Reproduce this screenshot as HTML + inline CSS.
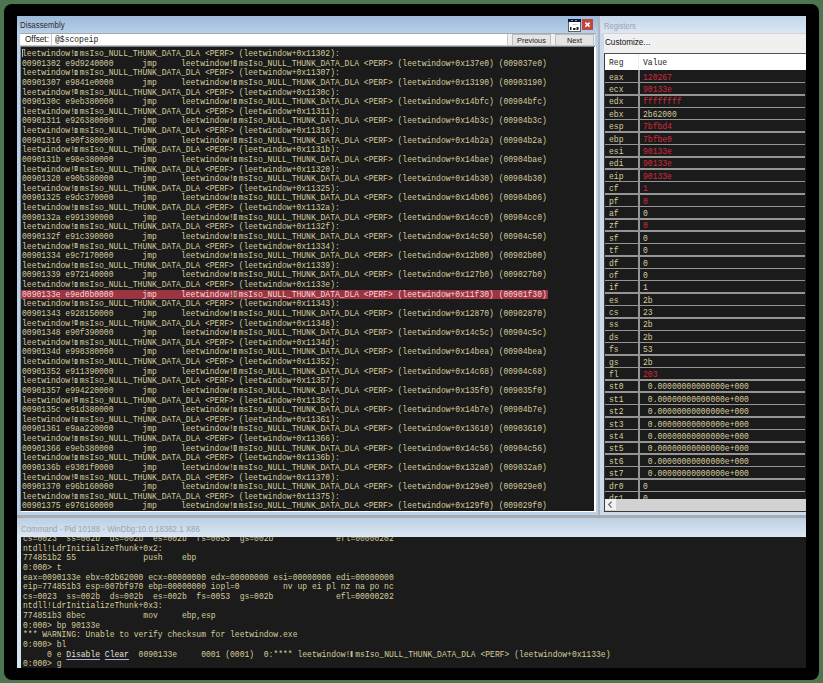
<!DOCTYPE html>
<html><head><meta charset="utf-8">
<style>
*{margin:0;padding:0;box-sizing:border-box}
html,body{width:823px;height:683px;overflow:hidden;background:#4c7550}
body{position:relative;font-family:"Liberation Sans",sans-serif}
.abs{position:absolute}
#frame{left:4px;top:4px;width:815px;height:676px;background:#000;border-radius:8px}
#dis{left:17px;top:16px;width:581px;height:499px;background:#b9d1ea}
#distitle{left:17px;top:16px;width:581px;height:17px;background:linear-gradient(#9cb9d8,#b8d0ea)}
.title{font-size:8.4px;color:#1e2a3a;white-space:nowrap;line-height:1}
#offrow{left:20px;top:33px;width:575px;height:13px;background:#f0f0f0}
#offlbl{left:20px;top:33px;width:31px;height:13px;background:#fff}
#edit{left:51px;top:33px;width:457px;height:13px;background:#fff;border-left:1px solid #c8c8c8;border-right:1px solid #c8c8c8}
.btn{top:34px;height:12px;background:#e4e4e4;border:1px solid #bdbdbd;font-size:7.4px;color:#1a1a1a;text-align:center;line-height:11px}
.mono{font-family:"Liberation Mono",monospace;font-size:8.4px;line-height:9.64px;white-space:pre;color:#d6cc9c}
.sx{transform:scale(0.958,1.0001);transform-origin:0 0;position:absolute;left:0;top:0}
#distext{left:21px;top:47px;width:573px;height:463.5px;background:#1b1b1b;overflow:hidden}
#diswhite{left:21px;top:46px;width:574.6px;height:466.2px;background:#fbfdff}
#distext .ln{height:9.64px;}
.hl{color:#f6dada}
#hlbar{left:21px;top:290.3px;width:527px;height:9.2px;background:#9c3442}
.bx{display:inline-block;width:5.04px;height:6px;position:relative;}
.bx:after{content:"";position:absolute;left:0px;top:0.8px;width:2.7px;height:5.2px;background:#3a3830;border:0.8px solid #c4ba8e;box-sizing:border-box}
#vsep{left:598px;top:16px;width:2.8px;height:499px;background:#b0b4b8}
#reg{left:600px;top:16px;width:206px;height:499px;background:#cadbed}
#regtitle{left:600.8px;top:16px;width:205.2px;height:17px;background:linear-gradient(#c3d5e9,#dbe7f4)}
#cust{left:603.5px;top:33px;width:202.5px;height:20.3px;background:#f0f0f0;border-top:1px solid #d4d4d4}
#tbl{left:604.3px;top:53.3px;width:201.7px;height:458.2px;background:#1b1b1b;border-left:1px solid #3c3c3c;border-top:1px solid #505050;border-bottom:1px solid #3c3c3c}
#thead{left:605px;top:54.3px;width:201px;height:15.8px;background:#fff}
.red{color:#d42a3c}
#colsep{left:638px;top:70.1px;width:1.5px;height:429px;background:#959595}
.rsep{left:605px;width:200px;height:1.5px;background:#959595}
#hscroll{left:604.3px;top:499.4px;width:201.7px;height:12.3px;background:#d2d2d2;border-left:1px solid #3c3c3c;border-bottom:1.2px solid #3a3a3a}
#hsl{left:605.3px;top:499.4px;width:11px;height:11.1px;background:#f0f0f0}
#hsep{left:17px;top:514.8px;width:789px;height:3.1px;background:#a9adb2}
#cmdtitle{left:17px;top:517.9px;width:789px;height:19.5px;background:linear-gradient(#bccfe2,#dce8f3)}
#cmdtext{left:21px;top:537px;width:785px;height:130.5px;background:#1b1b1b;overflow:hidden}
#cmdleft{left:17px;top:537px;width:4.3px;height:130.5px;background:#d6e3f0}
u{text-decoration:underline;color:#e4e0d4;text-decoration-color:#a8b8d8;text-underline-offset:1.5px}
</style></head><body>
<div id="frame" class="abs"></div>
<div id="dis" class="abs"></div>
<div id="distitle" class="abs"></div>
<div class="abs title" style="left:20.4px;top:21.45px;color:#2b2b2b;transform:scaleX(0.939);transform-origin:0 0">Disassembly</div>
<svg class="abs" style="left:567.5px;top:18.5px" width="13" height="13" viewBox="0 0 13 13">
<rect x="0.5" y="0.5" width="12" height="12" fill="#fff" stroke="#5a5f6a" stroke-width="1"/>
<rect x="0" y="0" width="13" height="3" fill="#0c1440"/>
<rect x="3" y="1" width="2" height="1" fill="#8a8fb0"/><rect x="7" y="1" width="2" height="1" fill="#8a8fb0"/>
<rect x="2" y="8" width="1.5" height="3" fill="#222"/><rect x="5" y="9" width="2.5" height="2" fill="#222"/><rect x="8.5" y="8" width="2" height="3" fill="#222"/>
<rect x="4.5" y="5" width="5" height="1" fill="#ccc"/>
</svg>
<div id="close" class="abs" style="left:582.2px;top:19.4px;width:11px;height:11.1px;background:#c1463f"><svg width="11" height="11" style="position:absolute;left:0;top:0"><path d="M3.4 3.6 L7.6 7.6 M7.6 3.6 L3.4 7.6" stroke="#fff" stroke-width="1.5"/></svg></div>
<div id="offrow" class="abs"></div>
<div id="offlbl" class="abs"></div>
<div class="abs title" style="left:24.8px;top:34.7px;color:#111;transform:scaleX(0.975);transform-origin:0 0">Offset:</div>
<div id="edit" class="abs"></div>
<div class="mono" style="color:#222"><div class="sx" style="left:55px;top:35.6px">@$scopeip</div></div>
<div class="abs btn" style="left:512px;width:39px">Previous</div>
<div class="abs btn" style="left:555px;width:39px">Next</div>
<div id="diswhite" class="abs"></div>
<div class="abs" style="left:20.3px;top:44.8px;width:575px;height:2.4px;background:linear-gradient(#e8e8e8,#5a5a5a)"></div>
<div class="abs" style="left:20px;top:32.6px;width:576px;height:0.9px;background:#a0a8b0"></div>
<div class="abs" style="left:20.3px;top:46px;width:0.9px;height:465px;background:#8a96a4"></div>
<div id="distext" class="abs mono"><div id="hlbar" class="abs" style="left:0;top:243.3px"></div><div class="sx" style="left:1.1px;top:2.85px"><div class="ln">leetwindow!<span class="bx"></span>msIso_NULL_THUNK_DATA_DLA &lt;PERF&gt; (leetwindow+0x11302):</div><div class="ln">00901302 e9d9240000      jmp     leetwindow!<span class="bx"></span>msIso_NULL_THUNK_DATA_DLA &lt;PERF&gt; (leetwindow+0x137e0) (009037e0)</div><div class="ln">leetwindow!<span class="bx"></span>msIso_NULL_THUNK_DATA_DLA &lt;PERF&gt; (leetwindow+0x11307):</div><div class="ln">00901307 e9841e0000      jmp     leetwindow!<span class="bx"></span>msIso_NULL_THUNK_DATA_DLA &lt;PERF&gt; (leetwindow+0x13190) (00903190)</div><div class="ln">leetwindow!<span class="bx"></span>msIso_NULL_THUNK_DATA_DLA &lt;PERF&gt; (leetwindow+0x1130c):</div><div class="ln">0090130c e9eb380000      jmp     leetwindow!<span class="bx"></span>msIso_NULL_THUNK_DATA_DLA &lt;PERF&gt; (leetwindow+0x14bfc) (00904bfc)</div><div class="ln">leetwindow!<span class="bx"></span>msIso_NULL_THUNK_DATA_DLA &lt;PERF&gt; (leetwindow+0x11311):</div><div class="ln">00901311 e926380000      jmp     leetwindow!<span class="bx"></span>msIso_NULL_THUNK_DATA_DLA &lt;PERF&gt; (leetwindow+0x14b3c) (00904b3c)</div><div class="ln">leetwindow!<span class="bx"></span>msIso_NULL_THUNK_DATA_DLA &lt;PERF&gt; (leetwindow+0x11316):</div><div class="ln">00901316 e90f380000      jmp     leetwindow!<span class="bx"></span>msIso_NULL_THUNK_DATA_DLA &lt;PERF&gt; (leetwindow+0x14b2a) (00904b2a)</div><div class="ln">leetwindow!<span class="bx"></span>msIso_NULL_THUNK_DATA_DLA &lt;PERF&gt; (leetwindow+0x1131b):</div><div class="ln">0090131b e98e380000      jmp     leetwindow!<span class="bx"></span>msIso_NULL_THUNK_DATA_DLA &lt;PERF&gt; (leetwindow+0x14bae) (00904bae)</div><div class="ln">leetwindow!<span class="bx"></span>msIso_NULL_THUNK_DATA_DLA &lt;PERF&gt; (leetwindow+0x11320):</div><div class="ln">00901320 e90b380000      jmp     leetwindow!<span class="bx"></span>msIso_NULL_THUNK_DATA_DLA &lt;PERF&gt; (leetwindow+0x14b30) (00904b30)</div><div class="ln">leetwindow!<span class="bx"></span>msIso_NULL_THUNK_DATA_DLA &lt;PERF&gt; (leetwindow+0x11325):</div><div class="ln">00901325 e9dc370000      jmp     leetwindow!<span class="bx"></span>msIso_NULL_THUNK_DATA_DLA &lt;PERF&gt; (leetwindow+0x14b06) (00904b06)</div><div class="ln">leetwindow!<span class="bx"></span>msIso_NULL_THUNK_DATA_DLA &lt;PERF&gt; (leetwindow+0x1132a):</div><div class="ln">0090132a e991390000      jmp     leetwindow!<span class="bx"></span>msIso_NULL_THUNK_DATA_DLA &lt;PERF&gt; (leetwindow+0x14cc0) (00904cc0)</div><div class="ln">leetwindow!<span class="bx"></span>msIso_NULL_THUNK_DATA_DLA &lt;PERF&gt; (leetwindow+0x1132f):</div><div class="ln">0090132f e91c390000      jmp     leetwindow!<span class="bx"></span>msIso_NULL_THUNK_DATA_DLA &lt;PERF&gt; (leetwindow+0x14c50) (00904c50)</div><div class="ln">leetwindow!<span class="bx"></span>msIso_NULL_THUNK_DATA_DLA &lt;PERF&gt; (leetwindow+0x11334):</div><div class="ln">00901334 e9c7170000      jmp     leetwindow!<span class="bx"></span>msIso_NULL_THUNK_DATA_DLA &lt;PERF&gt; (leetwindow+0x12b00) (00902b00)</div><div class="ln">leetwindow!<span class="bx"></span>msIso_NULL_THUNK_DATA_DLA &lt;PERF&gt; (leetwindow+0x11339):</div><div class="ln">00901339 e972140000      jmp     leetwindow!<span class="bx"></span>msIso_NULL_THUNK_DATA_DLA &lt;PERF&gt; (leetwindow+0x127b0) (009027b0)</div><div class="ln">leetwindow!<span class="bx"></span>msIso_NULL_THUNK_DATA_DLA &lt;PERF&gt; (leetwindow+0x1133e):</div><div class="ln hl">0090133e e9ed0b0000      jmp     leetwindow!<span class="bx"></span>msIso_NULL_THUNK_DATA_DLA &lt;PERF&gt; (leetwindow+0x11f30) (00901f30)</div><div class="ln">leetwindow!<span class="bx"></span>msIso_NULL_THUNK_DATA_DLA &lt;PERF&gt; (leetwindow+0x11343):</div><div class="ln">00901343 e928150000      jmp     leetwindow!<span class="bx"></span>msIso_NULL_THUNK_DATA_DLA &lt;PERF&gt; (leetwindow+0x12870) (00902870)</div><div class="ln">leetwindow!<span class="bx"></span>msIso_NULL_THUNK_DATA_DLA &lt;PERF&gt; (leetwindow+0x11348):</div><div class="ln">00901348 e90f390000      jmp     leetwindow!<span class="bx"></span>msIso_NULL_THUNK_DATA_DLA &lt;PERF&gt; (leetwindow+0x14c5c) (00904c5c)</div><div class="ln">leetwindow!<span class="bx"></span>msIso_NULL_THUNK_DATA_DLA &lt;PERF&gt; (leetwindow+0x1134d):</div><div class="ln">0090134d e998380000      jmp     leetwindow!<span class="bx"></span>msIso_NULL_THUNK_DATA_DLA &lt;PERF&gt; (leetwindow+0x14bea) (00904bea)</div><div class="ln">leetwindow!<span class="bx"></span>msIso_NULL_THUNK_DATA_DLA &lt;PERF&gt; (leetwindow+0x11352):</div><div class="ln">00901352 e911390000      jmp     leetwindow!<span class="bx"></span>msIso_NULL_THUNK_DATA_DLA &lt;PERF&gt; (leetwindow+0x14c68) (00904c68)</div><div class="ln">leetwindow!<span class="bx"></span>msIso_NULL_THUNK_DATA_DLA &lt;PERF&gt; (leetwindow+0x11357):</div><div class="ln">00901357 e994220000      jmp     leetwindow!<span class="bx"></span>msIso_NULL_THUNK_DATA_DLA &lt;PERF&gt; (leetwindow+0x135f0) (009035f0)</div><div class="ln">leetwindow!<span class="bx"></span>msIso_NULL_THUNK_DATA_DLA &lt;PERF&gt; (leetwindow+0x1135c):</div><div class="ln">0090135c e91d380000      jmp     leetwindow!<span class="bx"></span>msIso_NULL_THUNK_DATA_DLA &lt;PERF&gt; (leetwindow+0x14b7e) (00904b7e)</div><div class="ln">leetwindow!<span class="bx"></span>msIso_NULL_THUNK_DATA_DLA &lt;PERF&gt; (leetwindow+0x11361):</div><div class="ln">00901361 e9aa220000      jmp     leetwindow!<span class="bx"></span>msIso_NULL_THUNK_DATA_DLA &lt;PERF&gt; (leetwindow+0x13610) (00903610)</div><div class="ln">leetwindow!<span class="bx"></span>msIso_NULL_THUNK_DATA_DLA &lt;PERF&gt; (leetwindow+0x11366):</div><div class="ln">00901366 e9eb380000      jmp     leetwindow!<span class="bx"></span>msIso_NULL_THUNK_DATA_DLA &lt;PERF&gt; (leetwindow+0x14c56) (00904c56)</div><div class="ln">leetwindow!<span class="bx"></span>msIso_NULL_THUNK_DATA_DLA &lt;PERF&gt; (leetwindow+0x1136b):</div><div class="ln">0090136b e9301f0000      jmp     leetwindow!<span class="bx"></span>msIso_NULL_THUNK_DATA_DLA &lt;PERF&gt; (leetwindow+0x132a0) (009032a0)</div><div class="ln">leetwindow!<span class="bx"></span>msIso_NULL_THUNK_DATA_DLA &lt;PERF&gt; (leetwindow+0x11370):</div><div class="ln">00901370 e96b160000      jmp     leetwindow!<span class="bx"></span>msIso_NULL_THUNK_DATA_DLA &lt;PERF&gt; (leetwindow+0x129e0) (009029e0)</div><div class="ln">leetwindow!<span class="bx"></span>msIso_NULL_THUNK_DATA_DLA &lt;PERF&gt; (leetwindow+0x11375):</div><div class="ln">00901375 e976160000      jmp     leetwindow!<span class="bx"></span>msIso_NULL_THUNK_DATA_DLA &lt;PERF&gt; (leetwindow+0x129f0) (009029f0)</div></div></div>
<div class="abs" style="left:22px;top:48.5px;width:1px;height:8.5px;background:#b8b8b8"></div>
<div id="vsep" class="abs"></div>
<div id="reg" class="abs"></div>
<div id="regtitle" class="abs"></div>
<div class="abs title" style="left:603.9px;top:21.5px;color:#9aa4ae;transform:scaleX(0.9);transform-origin:0 0">Registers</div>
<div id="cust" class="abs"></div>
<div class="abs title" style="left:605.3px;top:37.9px;color:#111;transform:scaleX(0.97);transform-origin:0 0">Customize...</div>
<div id="tbl" class="abs"></div>
<div id="thead" class="abs"></div>
<div class="abs" style="left:638.3px;top:54px;width:1px;height:16px;background:#ececec"></div>
<div id="colsep" class="abs"></div>
<div class="mono" style="color:#222"><div class="sx" style="left:609.3px;top:58.5px">Reg</div><div class="sx" style="left:643.3px;top:58.5px">Value</div></div>
<div class="mono"><div class="sx" style="top:73.65px;left:609.3px">eax</div><div class="sx red" style="top:73.65px;left:643.3px">120267</div><div class="sx" style="top:86.04px;left:609.3px">ecx</div><div class="sx red" style="top:86.04px;left:643.3px">90133e</div><div class="sx" style="top:98.43px;left:609.3px">edx</div><div class="sx red" style="top:98.43px;left:643.3px">ffffffff</div><div class="sx" style="top:110.82px;left:609.3px">ebx</div><div class="sx " style="top:110.82px;left:643.3px">2b62000</div><div class="sx" style="top:123.21px;left:609.3px">esp</div><div class="sx red" style="top:123.21px;left:643.3px">7bfbd4</div><div class="sx" style="top:135.60px;left:609.3px">ebp</div><div class="sx red" style="top:135.60px;left:643.3px">7bfbe0</div><div class="sx" style="top:147.99px;left:609.3px">esi</div><div class="sx red" style="top:147.99px;left:643.3px">90133e</div><div class="sx" style="top:160.38px;left:609.3px">edi</div><div class="sx red" style="top:160.38px;left:643.3px">90133e</div><div class="sx" style="top:172.77px;left:609.3px">eip</div><div class="sx red" style="top:172.77px;left:643.3px">90133e</div><div class="sx" style="top:185.16px;left:609.3px">cf</div><div class="sx red" style="top:185.16px;left:643.3px">1</div><div class="sx" style="top:197.55px;left:609.3px">pf</div><div class="sx red" style="top:197.55px;left:643.3px">0</div><div class="sx" style="top:209.94px;left:609.3px">af</div><div class="sx " style="top:209.94px;left:643.3px">0</div><div class="sx" style="top:222.33px;left:609.3px">zf</div><div class="sx red" style="top:222.33px;left:643.3px">0</div><div class="sx" style="top:234.72px;left:609.3px">sf</div><div class="sx " style="top:234.72px;left:643.3px">0</div><div class="sx" style="top:247.11px;left:609.3px">tf</div><div class="sx " style="top:247.11px;left:643.3px">0</div><div class="sx" style="top:259.50px;left:609.3px">df</div><div class="sx " style="top:259.50px;left:643.3px">0</div><div class="sx" style="top:271.89px;left:609.3px">of</div><div class="sx " style="top:271.89px;left:643.3px">0</div><div class="sx" style="top:284.28px;left:609.3px">if</div><div class="sx " style="top:284.28px;left:643.3px">1</div><div class="sx" style="top:296.67px;left:609.3px">es</div><div class="sx " style="top:296.67px;left:643.3px">2b</div><div class="sx" style="top:309.06px;left:609.3px">cs</div><div class="sx " style="top:309.06px;left:643.3px">23</div><div class="sx" style="top:321.45px;left:609.3px">ss</div><div class="sx " style="top:321.45px;left:643.3px">2b</div><div class="sx" style="top:333.84px;left:609.3px">ds</div><div class="sx " style="top:333.84px;left:643.3px">2b</div><div class="sx" style="top:346.23px;left:609.3px">fs</div><div class="sx " style="top:346.23px;left:643.3px">53</div><div class="sx" style="top:358.62px;left:609.3px">gs</div><div class="sx " style="top:358.62px;left:643.3px">2b</div><div class="sx" style="top:371.01px;left:609.3px">fl</div><div class="sx red" style="top:371.01px;left:643.3px">203</div><div class="sx" style="top:383.40px;left:609.3px">st0</div><div class="sx " style="top:383.40px;left:643.3px"> 0.00000000000000e+000</div><div class="sx" style="top:395.79px;left:609.3px">st1</div><div class="sx " style="top:395.79px;left:643.3px"> 0.00000000000000e+000</div><div class="sx" style="top:408.18px;left:609.3px">st2</div><div class="sx " style="top:408.18px;left:643.3px"> 0.00000000000000e+000</div><div class="sx" style="top:420.57px;left:609.3px">st3</div><div class="sx " style="top:420.57px;left:643.3px"> 0.00000000000000e+000</div><div class="sx" style="top:432.96px;left:609.3px">st4</div><div class="sx " style="top:432.96px;left:643.3px"> 0.00000000000000e+000</div><div class="sx" style="top:445.35px;left:609.3px">st5</div><div class="sx " style="top:445.35px;left:643.3px"> 0.00000000000000e+000</div><div class="sx" style="top:457.74px;left:609.3px">st6</div><div class="sx " style="top:457.74px;left:643.3px"> 0.00000000000000e+000</div><div class="sx" style="top:470.13px;left:609.3px">st7</div><div class="sx " style="top:470.13px;left:643.3px"> 0.00000000000000e+000</div><div class="sx" style="top:482.52px;left:609.3px">dr0</div><div class="sx " style="top:482.52px;left:643.3px">0</div><div class="sx" style="top:494.91px;left:609.3px">dr1</div><div class="sx " style="top:494.91px;left:643.3px">0</div><div class="abs rsep" style="top:81.74px"></div><div class="abs rsep" style="top:94.13px"></div><div class="abs rsep" style="top:106.52px"></div><div class="abs rsep" style="top:118.91px"></div><div class="abs rsep" style="top:131.30px"></div><div class="abs rsep" style="top:143.69px"></div><div class="abs rsep" style="top:156.08px"></div><div class="abs rsep" style="top:168.47px"></div><div class="abs rsep" style="top:180.86px"></div><div class="abs rsep" style="top:193.25px"></div><div class="abs rsep" style="top:205.64px"></div><div class="abs rsep" style="top:218.03px"></div><div class="abs rsep" style="top:230.42px"></div><div class="abs rsep" style="top:242.81px"></div><div class="abs rsep" style="top:255.20px"></div><div class="abs rsep" style="top:267.59px"></div><div class="abs rsep" style="top:279.98px"></div><div class="abs rsep" style="top:292.37px"></div><div class="abs rsep" style="top:304.76px"></div><div class="abs rsep" style="top:317.15px"></div><div class="abs rsep" style="top:329.54px"></div><div class="abs rsep" style="top:341.93px"></div><div class="abs rsep" style="top:354.32px"></div><div class="abs rsep" style="top:366.71px"></div><div class="abs rsep" style="top:379.10px"></div><div class="abs rsep" style="top:391.49px"></div><div class="abs rsep" style="top:403.88px"></div><div class="abs rsep" style="top:416.27px"></div><div class="abs rsep" style="top:428.66px"></div><div class="abs rsep" style="top:441.05px"></div><div class="abs rsep" style="top:453.44px"></div><div class="abs rsep" style="top:465.83px"></div><div class="abs rsep" style="top:478.22px"></div><div class="abs rsep" style="top:490.61px"></div></div>
<div id="hscroll" class="abs"></div>
<div id="hsl" class="abs"><svg width="11" height="11" style="position:absolute;left:0;top:0"><path d="M6.6 2.6 L3.8 5.6 L6.6 8.6" stroke="#606060" stroke-width="1.2" fill="none"/></svg></div>
<div id="hsep" class="abs"></div>
<div id="cmdtitle" class="abs"></div>
<div class="abs title" style="left:20.8px;top:524.6px;color:#9aa4ae;transform:scaleX(0.944);transform-origin:0 0">Command - Pid 10188 - WinDbg:10.0.18362.1 X86</div>
<div id="cmdleft" class="abs"></div>
<div id="cmdtext" class="abs mono"><div class="sx" style="left:1.6px;top:-2.1px"><div class="ln">cs=0023  ss=002b  ds=002b  es=002b  fs=0053  gs=002b             efl=00000202</div><div class="ln">ntdll!LdrInitializeThunk+0x2:</div><div class="ln">774851b2 55              push    ebp</div><div class="ln">0:000&gt; t</div><div class="ln">eax=0090133e ebx=02b62000 ecx=00000000 edx=00000000 esi=00000000 edi=00000000</div><div class="ln">eip=774851b3 esp=007bf970 ebp=00000000 iopl=0         nv up ei pl nz na po nc</div><div class="ln">cs=0023  ss=002b  ds=002b  es=002b  fs=0053  gs=002b             efl=00000202</div><div class="ln">ntdll!LdrInitializeThunk+0x3:</div><div class="ln">774851b3 8bec            mov     ebp,esp</div><div class="ln">0:000&gt; bp 90133e</div><div class="ln">*** WARNING: Unable to verify checksum for leetwindow.exe</div><div class="ln">0:000&gt; bl</div><div class="ln">     0 e <u>Disable</u> <u>Clear</u>  0090133e     0001 (0001)  0:**** leetwindow!<span class="bx"></span>msIso_NULL_THUNK_DATA_DLA &lt;PERF&gt; (leetwindow+0x1133e)</div><div class="ln">0:000&gt; g</div></div></div>
</body></html>
